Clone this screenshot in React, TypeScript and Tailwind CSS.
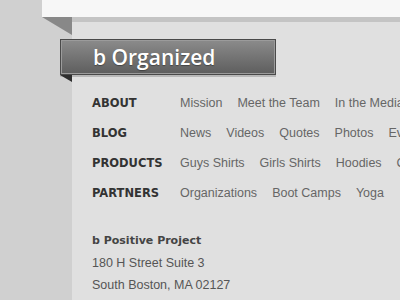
const nav: { label: string; links: string[] }[] = [
  { label: 'ABOUT', links: ['Mission', 'Meet the Team', 'In the Media'] },
  { label: 'BLOG', links: ['News', 'Videos', 'Quotes', 'Photos', 'Events'] },
  { label: 'PRODUCTS', links: ['Guys Shirts', 'Girls Shirts', 'Hoodies', 'Caps'] },
  { label: 'PARTNERS', links: ['Organizations', 'Boot Camps', 'Yoga'] },
]

function Ribbon() {
  return (
    <div className="relative -ml-[32px] mt-[17px] w-[216px]">
      <div className="h-[36px] border border-[#4a4a4a] shadow-[0_2px_0_#b8b8b8]">
        <div className="h-full border border-[#9b9b9b] bg-gradient-to-b from-[#8a8a8a] to-[#5f5f5f] pl-[31px] flex items-center">
          <span className="text-white text-[21px] leading-none font-semibold font-['Open_Sans',sans-serif] [text-shadow:0_1px_1px_rgba(0,0,0,0.35)]">
            b Organized
          </span>
        </div>
      </div>
      <svg className="absolute left-0 top-[36px]" width="12" height="7" viewBox="0 0 12 7">
        <polygon points="0,0 12,0 12,7" fill="#2e2e2e" />
      </svg>
    </div>
  )
}

export default function App() {
  return (
    <div className="w-[400px] h-[300px] bg-[#d0d0d0] flex overflow-hidden">
      <div className="w-[42px] shrink-0" />
      <div className="flex-1 flex flex-col">
        <div className="h-[17px] shrink-0 bg-[#f7f7f7]" />
        <div className="flex flex-1">
          <div className="w-[30px] shrink-0">
            <svg width="30" height="18" viewBox="0 0 30 18" className="block">
              <polygon points="0,0 30,0 30,18" fill="#888888" />
            </svg>
          </div>
          <div className="flex-1 bg-[#e0e0e0] border-t-[5px] border-[#c4c4c4] pl-[20px] flex flex-col">
            <Ribbon />
            <div className="mt-[12px] flex flex-col">
              {nav.map((row) => (
                <div key={row.label} className="h-[30px] flex items-center whitespace-nowrap">
                  <span className="w-[88px] shrink-0 pt-[3px] text-[11.5px] font-bold text-[#333] font-['DejaVu_Sans',sans-serif]">
                    {row.label}
                  </span>
                  <div className="flex gap-[15px] pt-[2px] text-[12.5px] text-[#666] font-['Liberation_Sans',Arial,sans-serif]">
                    {row.links.map((l) => (
                      <span key={l}>{l}</span>
                    ))}
                  </div>
                </div>
              ))}
            </div>
            <div className="mt-[23px] flex flex-col leading-[22px] whitespace-nowrap">
              <span className="text-[11px] font-bold text-[#444] font-['DejaVu_Sans',sans-serif]">
                b Positive Project
              </span>
              <span className="text-[12.5px] text-[#555] font-['Liberation_Sans',Arial,sans-serif]">
                180 H Street Suite 3
              </span>
              <span className="text-[12.5px] text-[#555] font-['Liberation_Sans',Arial,sans-serif]">
                South Boston, MA 02127
              </span>
            </div>
          </div>
        </div>
      </div>
    </div>
  )
}
